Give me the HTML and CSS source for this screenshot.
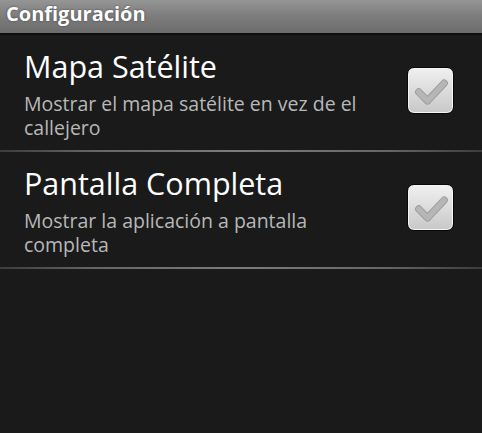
FILE: index.html
```html
<!DOCTYPE html>
<html lang="es">
<head>
<meta charset="utf-8">
<title>Configuración</title>
<link rel="stylesheet" href="styles.css">
</head>
<body>
<div class="titlebar">Configuración</div>
<ul class="prefs">
  <li class="pref">
    <div class="pref-text">
      <div class="pref-title">Mapa Satélite</div>
      <div class="pref-summary">Mostrar el mapa satélite en vez de el callejero</div>
    </div>
    <div class="checkbox">
      <svg viewBox="0 0 46 46" width="46" height="46">
        <path class="check-edge" d="M11 24 L20 33 L37 15" />
        <path class="check" d="M11 24 L20 33 L37 15" />
      </svg>
    </div>
  </li>
  <li class="pref">
    <div class="pref-text">
      <div class="pref-title">Pantalla Completa</div>
      <div class="pref-summary">Mostrar la aplicación a pantalla completa</div>
    </div>
    <div class="checkbox">
      <svg viewBox="0 0 46 46" width="46" height="46">
        <path class="check-edge" d="M11 24 L20 33 L37 15" />
        <path class="check" d="M11 24 L20 33 L37 15" />
      </svg>
    </div>
  </li>
</ul>
</body>
</html>
```
FILE: styles.css
```css
html, body {
  margin: 0;
  padding: 0;
  height: 100%;
}
body {
  background: #1a1a1a;
  font-family: "Open Sans", "DejaVu Sans", sans-serif;
  color: #ffffff;
}
.titlebar {
  height: 35px;
  box-sizing: border-box;
  padding: 2px 0 0 6px;
  background: linear-gradient(#959595, #7c7c7c 50%, #6c6c6c);
  border-bottom: 2px solid #0e0e0e;
  font-weight: bold;
  font-size: 20px;
  line-height: 24px;
  color: #ffffff;
  text-shadow: 0 0 2px #3a3a3a;
}
.prefs {
  list-style: none;
  margin: 0;
  padding: 0;
}
.pref {
  display: flex;
  align-items: flex-start;
  height: 117px;
  box-sizing: border-box;
  padding: 13px 28px 0 24px;
  border-bottom: 2px solid transparent;
  border-image: linear-gradient(90deg, #3c3c3c, #666666 20%, #7c7c7c 50%, #666666 80%, #3c3c3c) 1;
}
.pref-text {
  flex: 1;
}
.pref-title {
  font-size: 30.5px;
  line-height: 36px;
  color: #ffffff;
}
.pref-summary {
  margin-top: 8px;
  font-size: 19.5px;
  line-height: 23.5px;
  color: #b8b8b8;
  max-width: 350px;
}
.checkbox {
  flex: none;
  width: 47px;
  height: 47px;
  margin-top: 19px;
  box-sizing: border-box;
  border-radius: 7px;
  border: 1px solid #080808;
  background: linear-gradient(#f0f0f0, #dadada 55%, #c8c8c8);
  box-shadow: inset 0 0 0 1px #f4f4f4;
  display: flex;
  align-items: center;
  justify-content: center;
}
.checkbox svg {
  display: block;
}
.check-edge {
  fill: none;
  stroke: #9c9c9c;
  stroke-width: 7.5;
  stroke-linecap: round;
  stroke-linejoin: round;
}
.check {
  fill: none;
  stroke: #b6b6b6;
  stroke-width: 5.5;
  stroke-linecap: round;
  stroke-linejoin: round;
}
```
